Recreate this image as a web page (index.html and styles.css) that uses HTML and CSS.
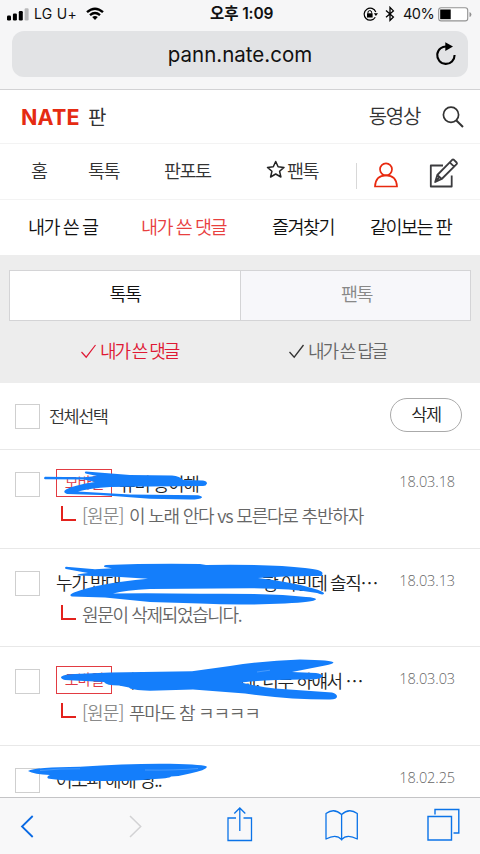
FILE: index.html
```html
<!DOCTYPE html>
<html lang="ko">
<head>
<meta charset="utf-8">
<title>NATE 판</title>
<link rel="stylesheet" href="styles.css">
</head>
<body>
<div class="screen">
  <header class="browser">
    <div class="status">
      <svg class="signal" width="22" height="14" viewBox="0 0 22 14"><rect x="0" y="8.5" width="4" height="5" rx="1.2"/><rect x="5.9" y="6.5" width="4" height="7" rx="1.2"/><rect x="11.8" y="4" width="4" height="9.5" rx="1.2"/><rect x="17.6" y="1.2" width="4" height="12.3" rx="1.2" fill="#b9b9ba"/></svg>
      <span class="carrier">LG U+</span>
      <svg class="wifi" width="18" height="14" viewBox="0 0 18 14" fill="none" stroke="#000" stroke-width="2.4"><path d="M1 5.2Q9-1.8 17 5.2M4 8.2Q9 4 14 8.2"/><path d="M6.2 10Q9 8 11.8 10L9 13Z" fill="#000" stroke="none"/></svg>
      <span class="clock">오후 1:09</span>
      <svg class="lock" width="15" height="15" viewBox="0 0 15 15"><path d="M12.8 5A6 6 0 1 0 12.3 10.3" fill="none" stroke="#000" stroke-width="1.2"/><path d="M10.8 6.3H15L12.9 9Z"/><rect x="4" y="6.3" width="5.6" height="4.2"/><path d="M5 6.5V5.2Q5 3.6 6.8 3.6T8.6 5.2V6.5" fill="none" stroke="#000"/></svg>
      <svg class="bt" width="10" height="16" viewBox="0 0 10 16" fill="none" stroke="#000" stroke-width="1.3"><path d="M1 4.6L8.4 11 5 14.4V1.4L8.4 4.9 1 11.3"/></svg>
      <span class="percent">40%</span>
      <svg class="battery" width="34" height="15" viewBox="0 0 34 15"><rect x=".7" y=".7" width="29" height="13.2" rx="2.5" fill="#fff" stroke="#929292" stroke-width="1.1"/><rect x="2.2" y="2.5" width="10.5" height="9.7"/><path d="M31.5 5Q33.4 5.5 33.4 7.5T31.5 10Z" fill="#929292"/></svg>
    </div>
    <div class="address"><span>pann.nate.com</span>
      <svg class="reload" width="22" height="26" viewBox="0 0 22 26"><path d="M12.4 5.600A8.700 8.700 0 1 0 19.600 14" fill="none" stroke="#000" stroke-width="2.1"/><path d="M10.3 1.2L18 5.6 10.3 10Z"/></svg>
    </div>
  </header>

  <div class="brand">
    <span class="logo">NATE</span><span class="pann">판</span>
    <span class="video">동영상</span>
    <svg width="22" height="22" viewBox="0 0 22 22" fill="none" stroke="#333" stroke-width="1.7"><circle cx="9" cy="8.8" r="7.6"/><path d="M14.4 14.5L21 21" stroke-width="2"/></svg>
  </div>

  <nav class="menu">
    <span>홈</span><span>톡톡</span><span>판포토</span>
    <span class="fan"><svg width="20" height="19" viewBox="0 0 20 19" fill="none" stroke="#222" stroke-width="1.5" stroke-linejoin="round"><path d="M9.7 1.5L12.1 6.8 18 7.4 13.6 11.3 14.9 17 9.7 14 4.6 17 5.9 11.3 1.5 7.4 7.3 6.8Z"/></svg><b>팬톡</b></span>
    <i class="rule"></i>
    <svg class="person" width="24" height="26" viewBox="0 0 24 26" fill="none" stroke="#e8290f" stroke-width="1.7"><circle cx="12" cy="7.3" r="6"/><path d="M1 24.5Q1.5 13.3 12 13.3T23 24.5Z"/></svg>
    <svg class="write" width="30" height="31" viewBox="0 0 30 31" fill="none" stroke="#3c3c3f" stroke-width="1.8" stroke-linejoin="round"><path d="M14 7.5H1.8V28.5H22.7V17.5"/><path d="M6.2 24L8.3 17 23.2 1.8Q24 1.1 24.9 1.8L27.6 4.5Q28.3 5.3 27.6 6.1L12.7 21ZM8.3 17L12.7 21M20.7 4.4L25.1 8.6M6.2 24L10.4 19.1"/></svg>
  </nav>

  <nav class="submenu">
    <span>내가 쓴 글</span><span class="on">내가 쓴 댓글</span><span>즐겨찾기</span><span>같이보는 판</span>
  </nav>

  <section class="filter">
    <div class="tabs"><span class="tab active">톡톡</span><span class="tab">팬톡</span></div>
    <div class="kinds">
      <span class="kind red"><svg width="17" height="15" viewBox="0 0 17 15" fill="none" stroke="currentColor" stroke-width="1.2"><path d="M1.5 8L6.2 13.2 15.5 1"/></svg>내가 쓴 댓글</span>
      <span class="kind"><svg width="17" height="15" viewBox="0 0 17 15" fill="none" stroke="#333" stroke-width="1.3"><path d="M1.5 8L6.2 13.2 15.5 1"/></svg>내가 쓴 답글</span>
    </div>
  </section>

  <div class="all"><i class="box"></i><span>전체선택</span><button>삭제</button></div>

  <main class="list">
    <article>
      <i class="box"></i>
      <div class="body">
        <p class="title"><em>모바일</em>뮤비 응이해</p>
        <p class="origin"><i class="elbow"></i><small>[원문]</small><span class="o1">이 노래 안다 vs 모른다로 추반하자</span></p>
      </div>
      <time>18.03.18</time>
    </article>
    <article>
      <i class="box"></i>
      <div class="body">
        <p class="title">누가 반대 <span class="tail">항 아빈데 솔직⋯</span></p>
        <p class="origin"><i class="elbow"></i><span>원문이 삭제되었습니다.</span></p>
      </div>
      <time>18.03.13</time>
    </article>
    <article>
      <i class="box"></i>
      <div class="body">
        <p class="title"><em>모바일</em>써놓 레 <span class="tail tail3">레, 너무 하얘서 ⋯</span></p>
        <p class="origin"><i class="elbow"></i><small>[원문]</small><span class="o3">푸마도 참 ㅋㅋㅋㅋ</span></p>
      </div>
      <time>18.03.03</time>
    </article>
    <article>
      <i class="box"></i>
      <div class="body"><p class="title">어쪼피 해해 딩..</p></div>
      <time>18.02.25</time>
    </article>
    <svg class="ink" width="480" height="348" viewBox="0 450 480 348" fill="#147efb">
      <path d="M45 476.7L84 477.3 97 476 85.5 473.5Q84 471.5 86 471.5L130 475 172 475.5Q180 476 183 480L203 480.5Q207 481 207 483.5 206 486.5 202 486L150 486.5 110 487Q90 488 78 491.5L130 494.5 198 495.2Q202 496 202 497.5 200 499.5 190 499.5L150 498.8 100 495 67 494Q62 492 66 489.5 74 485 95 482L84 479.5 45 479.3Q43 478 45 476.7Z"/>
      <path d="M66 566.8L95 569.2 112 568.2 104.5 567Q103 565.5 106 565 150 563.3 200 564L206 565Q270 564 305 568 322 569.5 322.5 573L322 576Q290 575.5 258 578 290 582 308 587 324 591 324 593.5 323 595.5 317 593 290 588.5 250 588.3L150 589Q125 590 113 593.5 150 592.8 200 593.8 270 593 306 597 316 597.5 316 599.5 314 602 285 603.5 240 605.5 200 603.5L150 602 105 597.5 72 596.5Q68 595 74 592.5 95 584 148 578.8L120 577 78 575.5Q75 574 88 573L66 569Q64 568 66 566.8Z"/>
      <path d="M62 676.3Q64 674.5 75 674L110 672.5 192 671.3 230 666Q265 660.5 300 659.5 333 660 333.5 662.5 333 664 325 665.5L292 672 316 673Q322 674 322.5 676 322 679 312 679.5 270 679 241 682.5 260 687 275 688.5L332 692.5Q337 694 337 696.5 337 700 328 699.5 290 699.5 245 693.5L193 689.5 150 690.7Q130 690 129 687.5L119 685.5Q106 685.5 104 682L65 680Q59 678 62 676.3Z"/>
      <path d="M28 771Q35 767 80 766.7 130 763.3 170 763.8 206 764.5 207 767 206 770 190 773.5 181 776 171 776.5 170 778.5 150 779.3 135 781.5 100 781 60 781 48 778.5 46 776.5 50 775 34 774.5 28 771Z"/>
      <g fill="none" stroke="#fff" stroke-opacity=".45" stroke-width=".5"><path d="M257 672L270 670.2M40 770.5Q60 768.5 80 768.8M145 770Q175 770.5 198 768.5"/></g>
    </svg>
  </main>

  <footer class="toolbar">
    <svg width="15" height="26" viewBox="0 0 15 26" fill="none" stroke="#0a6ae4" stroke-width="1.8"><path d="M12.7 3L2 13.5 12.7 24"/></svg>
    <svg width="15" height="26" viewBox="0 0 15 26" fill="none" stroke="#d2d2d4" stroke-width="1.5"><path d="M2 3L12.7 13.5 2 24"/></svg>
    <svg class="share" width="26" height="36" viewBox="0 0 26 36" fill="none" stroke="#0b73e8" stroke-width="1.3"><path d="M9 12H1V34.5H24.5V12H16.5M12.8 25V2M7.3 7.5L12.8 2 18.3 7.5"/></svg>
    <svg width="34" height="32" viewBox="0 0 34 32" fill="none" stroke="#0b73e8" stroke-width="1.3" stroke-linejoin="round"><path d="M16.6 4.5Q9-2.5 1 3.5V29Q11 23.5 16.6 29.5 22 23.5 32.3 29V3.5Q24-2.5 16.6 4.5V30.5"/></svg>
    <svg class="pages" width="33" height="33" viewBox="0 0 33 33" fill="none" stroke="#0b73e8" stroke-width="1.4"><path d="M1 8.5H24.5V32H1ZM8 6.5V1.5H31.8V25H26.5"/></svg>
  </footer>
</div>
</body>
</html>
```

FILE: styles.css
```css
* { box-sizing: border-box; }
body { margin: 0; background: #fff; }
p { margin: 0; }
svg { display: block; flex: none; }
.screen {
  width: 480px; height: 854px; overflow: hidden;
  display: flex; flex-direction: column;
  font-family: "Noto Sans CJK KR", sans-serif; font-weight: 350;
  font-size: 18.5px; letter-spacing: -1.5px; line-height: 28px; color: #333;
  white-space: nowrap;
}
.browser { height: 90px; flex: none; background: #f6f6f7; border-bottom: 1.5px solid #d2d2d4; }
.status {
  height: 31px; padding: 0 6px 5px 7px; display: grid; align-items: center;
  grid-template-columns: 27px 52px 124px 153px 22px 18px 35px 34px;
  font-family: Inter, "Noto Sans CJK KR", sans-serif; font-weight: 400; letter-spacing: 0; color: #111;
}
.carrier { font-size: 14px; letter-spacing: .3px; }
.clock { font-size: 15.5px; font-weight: 600; letter-spacing: -.1px; }
.percent { font-size: 14.5px; letter-spacing: -.5px; }
.address {
  margin: 0 12px; height: 46px; border-radius: 12px; background: #e2e3e5; color: #111;
  display: grid; grid-template-columns: 1fr auto 1fr; align-items: center;
  font: 400 20.5px Inter, sans-serif; letter-spacing: 0;
}
.address span { grid-column: 2; }
.reload { justify-self: end; margin-right: 11px; }

.brand { height: 54px; flex: none; padding: 0 16px 0 21px; display: flex; align-items: center; border-bottom: 1px solid #f3f3f3; }
.logo { width: 67px; font: 700 21.5px Inter, sans-serif; letter-spacing: .2px; color: #e52b12; }
.pann { font-size: 20px; font-weight: 400; }
.video { margin-left: auto; margin-right: 22px; font-size: 20px; margin-bottom: 2px; letter-spacing: -1.3px; }
.menu {
  height: 56px; flex: none; padding-left: 31px; border-bottom: 1px solid #f3f3f3;
  display: grid; grid-template-columns: 57px 76px 102px 90px 18px 55px 30px; align-items: center;
}
.menu > span { margin-bottom: 3px; }
.fan { display: flex; align-items: center; }
.fan svg { margin-bottom: 2px; }
.fan b { font-weight: 350; margin-left: 1px; }
.rule { width: 1px; height: 26px; background: #d8d8d8; margin-top: 8px; }
.person { margin-top: 7px; }
.write { margin-top: 4px; }
.submenu {
  height: 55px; flex: none; padding: 0 0 4px 28px; color: #111;
  display: grid; grid-template-columns: 113px 131px 98px auto; align-items: center;
}
.submenu .on { color: #e8403f; }

.filter { height: 128px; flex: none; background: #ededed; padding: 15px 9px 0; }
.tabs { height: 51px; display: grid; grid-template-columns: 231px 231px; border: 1px solid #d4d4d6; background: #f7f7fa; }
.tab { text-align: center; line-height: 45px; color: #888; }
.tab.active { background: #fff; color: #111; border-right: 1px solid #d4d4d6; }
.kinds { height: 58px; display: grid; grid-template-columns: 208px auto; padding-left: 71px; align-items: center; font-size: 18px; letter-spacing: -2.1px; }
.kind { display: flex; align-items: center; gap: 3px; color: #666; }
.kind svg { margin-top: 2px; }
.kind.red { color: #df1834; }

.all { height: 67px; flex: none; padding: 0 18px 0 15px; display: flex; align-items: center; border-bottom: 1px solid #e8e8e8; }
.box { display: block; flex: none; width: 25px; height: 25px; border: 1px solid #cfcfcf; background: #fff; }
.all span { margin-left: 9px; font-size: 17.5px; }
.all button {
  margin: 0 0 3px auto; width: 72px; height: 34px; padding: 0 0 1px; border: 1px solid #aaa; border-radius: 17px;
  background: #fff; font: inherit; font-size: 17.5px; line-height: 28px; letter-spacing: -1.4px; color: #222;
}

.list { position: relative; flex: none; height: 347px; overflow: hidden; }
.list article { height: 98.5px; padding: 19px 25px 0 15px; display: flex; align-items: flex-start; border-bottom: 1px solid #e8e8e8; }
.list .box { margin-top: 3px; }
.body { margin-left: 16px; width: 325px; }
.title { height: 28px; display: flex; align-items: center; font-size: 18px; line-height: 26px; letter-spacing: -1.4px; color: #222; padding-bottom: 0; }
.title em {
  width: 56px; height: 28px; margin-right: 7px; border: 1px solid #e23b42; color: #df3844;
  font-style: normal; font-size: 15px; line-height: 23px; text-align: center; letter-spacing: -1px;
}
.tail { margin-left: auto; margin-right: 4px; }
.tail3 { margin-right: 19px; }
.origin { height: 36px; display: flex; align-items: center; color: #666; font-size: 18px; letter-spacing: -1.35px; }
.elbow { width: 15px; height: 15px; margin: 0 6px 3px 5px; border: solid #e3221d; border-width: 0 0 2px 2px; }
.origin small { font-size: 18px; color: #8a8a8a; width: 47px; letter-spacing: -.9px; }
.o1 { letter-spacing: -1.2px; }
.o3 { letter-spacing: -1.2px; }
time { margin-left: auto; font: 300 14.5px/26px "Open Sans", sans-serif; letter-spacing: -.1px; color: #666; }
.ink { position: absolute; left: 0; top: 0; }

.toolbar {
  height: 57px; flex: none; padding-left: 20px; background: #f8f8f9; border-top: 1px solid #c4c4c6;
  display: grid; grid-template-columns: 108px 99px 98px 102px auto; align-items: center;
}
.share { margin-bottom: 4px; }
.pages { margin-bottom: 3px; }
```
